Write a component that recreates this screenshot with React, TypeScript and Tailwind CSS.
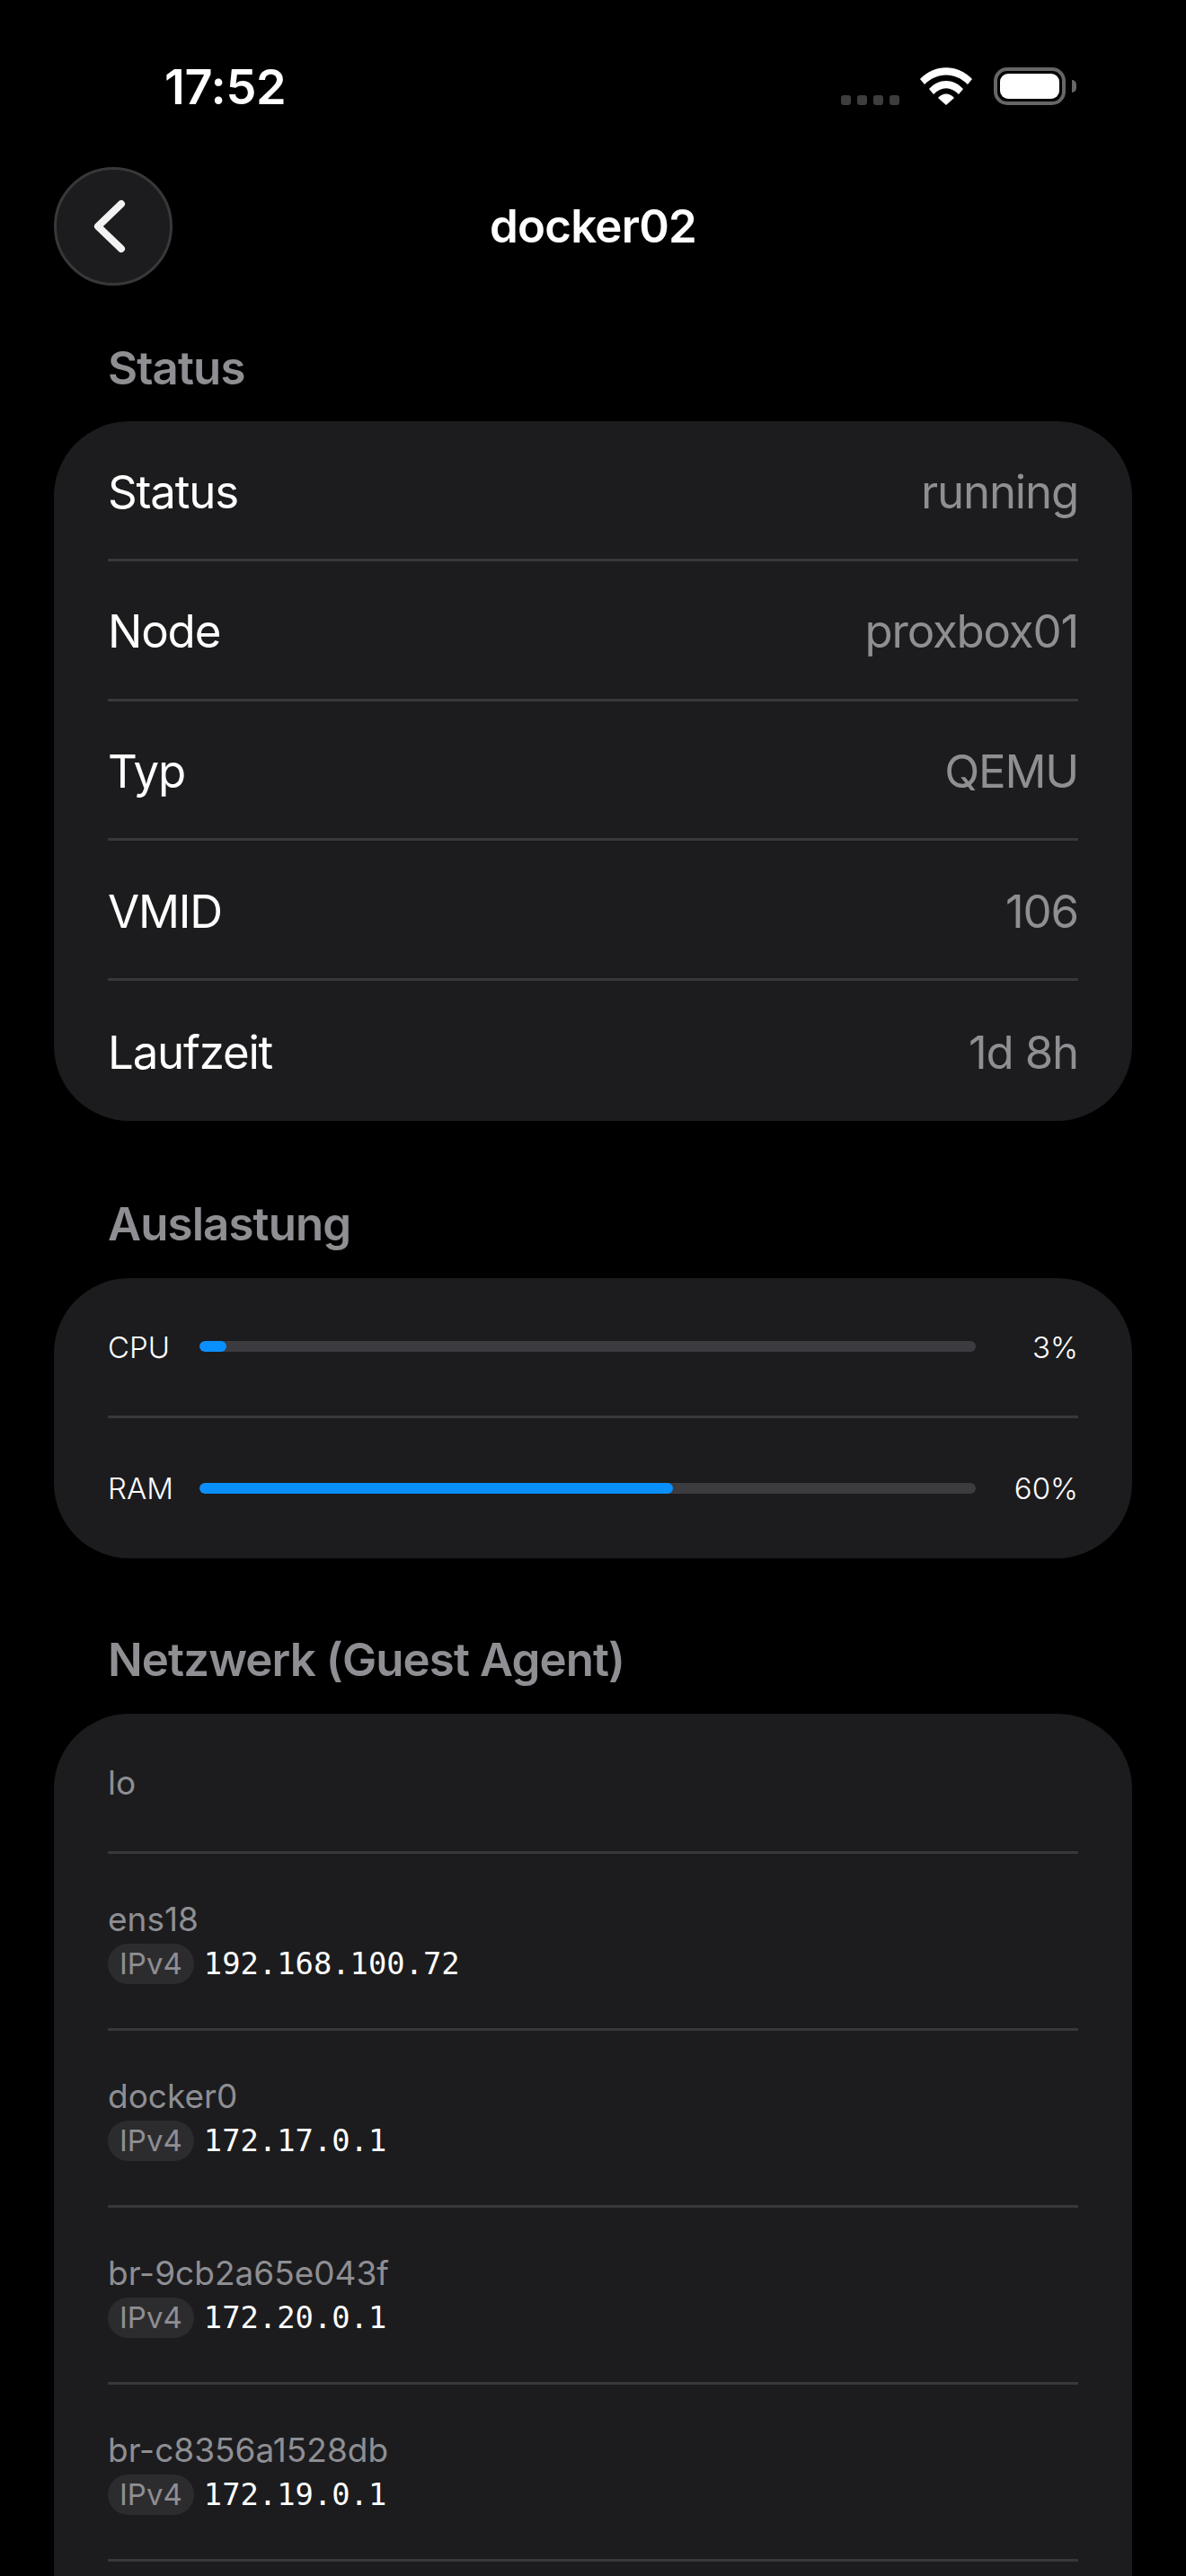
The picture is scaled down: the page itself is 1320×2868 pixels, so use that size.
const statusRows = [
  { label: "Status", value: "running" },
  { label: "Node", value: "proxbox01" },
  { label: "Typ", value: "QEMU" },
  { label: "VMID", value: "106" },
  { label: "Laufzeit", value: "1d 8h" },
];

const usage = [
  { label: "CPU", percent: 3, fill: 3.5 },
  { label: "RAM", percent: 60, fill: 61 },
];

const interfaces = [
  { name: "lo" },
  { name: "ens18", ip: "192.168.100.72" },
  { name: "docker0", ip: "172.17.0.1" },
  { name: "br-9cb2a65e043f", ip: "172.20.0.1" },
  { name: "br-c8356a1528db", ip: "172.19.0.1" },
];

function StatusBar() {
  return (
    <div className="h-[186px] pt-[75px] pl-[183px] pr-[122px] flex items-start justify-between">
      <span className="text-[54px] leading-[44px] font-semibold text-white tracking-[-0.3px]">17:52</span>
      <div className="flex items-end h-[42px]">
        <div className="flex gap-[7px]">
          <span className="w-[11px] h-[11px] rounded-[3px] bg-[#3d3d3d]" />
          <span className="w-[11px] h-[11px] rounded-[3px] bg-[#3d3d3d]" />
          <span className="w-[11px] h-[11px] rounded-[3px] bg-[#3d3d3d]" />
          <span className="w-[11px] h-[11px] rounded-[3px] bg-[#3d3d3d]" />
        </div>
        <svg className="ml-[23px]" width="58" height="42" viewBox="0 0 58 42" fill="white">
          <path d="M0 13 C16 -4 42 -4 58 13 L53 19 C39 5 19 5 5 19 Z" />
          <path d="M10 24 C21 12 37 12 48 24 L43 30 C34 21 24 21 15 30 Z" />
          <path d="M20 34 C25 28 33 28 38 34 L29 42 Z" />
        </svg>
        <div className="ml-[24px] flex items-center">
          <div className="w-[80px] h-[42px] rounded-[15px] border-[4px] border-[#666666] p-[3px]">
            <div className="w-full h-full rounded-[9px] bg-white" />
          </div>
          <div className="w-[5px] h-[14px] ml-[7px] rounded-r-full bg-[#666666]" />
        </div>
      </div>
    </div>
  );
}

function SectionTitle({ children, gap }: { children: string; gap: string }) {
  return (
    <h2 className={`h-[60px] ${gap} pl-[120px] pt-[1px] text-[51px] leading-[60px] font-semibold tracking-[-0.9px] text-[#8e8e93]`}>
      {children}
    </h2>
  );
}

export default function App() {
  return (
    <div className="h-[2868px] overflow-hidden bg-black flex flex-col font-['Inter',sans-serif]">
      <StatusBar />

      <div className="relative h-[132px] flex items-center justify-center px-[60px]">
        <button className="absolute left-[60px] top-0 w-[132px] h-[132px] rounded-full bg-[#1c1c1e] border-[3px] border-[#38383a] flex items-center justify-center">
          <svg
            className="mr-[9px]"
            width="36"
            height="60"
            viewBox="0 0 36 60"
            fill="none"
            stroke="#f2f2f2"
            strokeWidth="8"
            strokeLinecap="round"
            strokeLinejoin="round"
          >
            <path d="M31 5 L5 30 L31 55" />
          </svg>
        </button>
        <h1 className="text-[51px] leading-[60px] font-semibold tracking-[-0.8px] text-white">docker02</h1>
      </div>

      <div className="h-[61px] shrink-0" />
      <SectionTitle gap="mb-[30px]">Status</SectionTitle>
      <div className="mx-[60px] px-[60px] rounded-[84px] bg-[#1c1c1e]">
        {statusRows.map((row, i) => (
          <div
            key={row.label}
            className={`h-[155.8px] pt-[5px] flex items-center justify-between text-[51px] tracking-[-1.2px] ${
              i < statusRows.length - 1 ? "border-b-[3px] border-[#38383a]" : ""
            }`}
          >
            <span className="text-white">{row.label}</span>
            <span className="text-[#8e8e93]">{row.value}</span>
          </div>
        ))}
      </div>

      <div className="h-[84px] shrink-0" />
      <SectionTitle gap="mb-[31px]">Auslastung</SectionTitle>
      <div className="mx-[60px] px-[60px] rounded-[84px] bg-[#1c1c1e]">
        {usage.map((item, i) => (
          <div
            key={item.label}
            className={`h-[156px] flex items-center text-[33px] font-[350] text-white ${
              i < usage.length - 1 ? "border-b-[3px] border-[#38383a]" : ""
            }`}
          >
            <span className="w-[102px] pt-[2px]">{item.label}</span>
            <div className="w-[864px] h-[12px] rounded-full bg-[#3c3c40] overflow-hidden">
              <div className="h-full rounded-full bg-[#0a8fff]" style={{ width: `${item.fill}%` }} />
            </div>
            <span className="flex-1 pt-[2px] text-right">{item.percent}%</span>
          </div>
        ))}
      </div>

      <div className="h-[82px] shrink-0" />
      <SectionTitle gap="mb-[31px]">Netzwerk (Guest Agent)</SectionTitle>
      <div className="flex-1 mx-[60px] px-[60px] rounded-t-[84px] bg-[#1c1c1e]">
        {interfaces.map((item) => (
          <div
            key={item.name}
            className={`flex flex-col justify-center border-b-[3px] border-[#38383a] ${
              item.ip ? "h-[197px]" : "h-[156px]"
            }`}
          >
            <div className={`text-[37px] text-[#8e8e93] ${item.ip ? "leading-[47px] pb-[4px]" : "leading-[51px]"}`}>
              {item.name}
            </div>
            {item.ip && (
              <div className="flex items-center gap-[11px]">
                <span className="h-[45px] px-[13px] rounded-full bg-[#2c2c2e] text-[33px] leading-[45px] text-[#8e8e93]">
                  IPv4
                </span>
                <span className="font-['DejaVu_Sans_Mono',monospace] text-[33.8px] leading-[45px] text-white">
                  {item.ip}
                </span>
              </div>
            )}
          </div>
        ))}
      </div>
    </div>
  );
}
